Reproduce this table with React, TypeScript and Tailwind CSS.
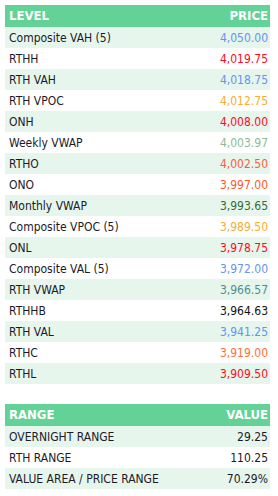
import React from 'react';

interface Level {
  name: string;
  price: string;
  color: string;
}

const levels: Level[] = [
  { name: 'Composite VAH (5)', price: '4,050.00', color: 'text-[#6495ed]' },
  { name: 'RTHH', price: '4,019.75', color: 'text-[#ff0a1e]' },
  { name: 'RTH VAH', price: '4,018.75', color: 'text-[#6495ed]' },
  { name: 'RTH VPOC', price: '4,012.75', color: 'text-[#f7ae32]' },
  { name: 'ONH', price: '4,008.00', color: 'text-[#ff0a1e]' },
  { name: 'Weekly VWAP', price: '4,003.97', color: 'text-[#8fbc8f]' },
  { name: 'RTHO', price: '4,002.50', color: 'text-[#ff5a3c]' },
  { name: 'ONO', price: '3,997.00', color: 'text-[#ff5a2a]' },
  { name: 'Monthly VWAP', price: '3,993.65', color: 'text-[#356b3a]' },
  { name: 'Composite VPOC (5)', price: '3,989.50', color: 'text-[#f7ae32]' },
  { name: 'ONL', price: '3,978.75', color: 'text-[#ff0a1e]' },
  { name: 'Composite VAL (5)', price: '3,972.00', color: 'text-[#6495ed]' },
  { name: 'RTH VWAP', price: '3,966.57', color: 'text-[#4f8f90]' },
  { name: 'RTHHB', price: '3,964.63', color: 'text-[#111111]' },
  { name: 'RTH VAL', price: '3,941.25', color: 'text-[#6495ed]' },
  { name: 'RTHC', price: '3,919.00', color: 'text-[#ff7038]' },
  { name: 'RTHL', price: '3,909.50', color: 'text-[#ff0a1e]' },
];

const ranges = [
  { name: 'OVERNIGHT RANGE', value: '29.25' },
  { name: 'RTH RANGE', value: '110.25' },
  { name: 'VALUE AREA / PRICE RANGE', value: '70.29%' },
];

const Header: React.FC<{ left: string; right: string }> = ({ left, right }) => (
  <div className="flex h-[22px] items-center justify-between bg-[#62d296] pl-1 pr-0.5 text-[13px] font-bold text-white">
    <span>{left}</span>
    <span>{right}</span>
  </div>
);

const Row: React.FC<{ index: number; left: string; right: string; color: string }> = ({ index, left, right, color }) => (
  <div
    className={`flex h-[21px] items-center justify-between pl-1 pr-0.5 text-[12px] ${
      index % 2 === 0 ? 'bg-[#e6f6ec]' : 'bg-white'
    }`}
  >
    <span className="text-[#1c1a2a]">{left}</span>
    <span className={color}>{right}</span>
  </div>
);

export default function App() {
  return (
    <div className="min-h-[496px] w-[278px] bg-white pl-[5px] pt-[5px] font-['DejaVu_Sans_Condensed',sans-serif]">
      <div className="w-[265px]">
        <Header left="LEVEL" right="PRICE" />
        {levels.map((l, i) => (
          <Row key={l.name} index={i} left={l.name} right={l.price} color={l.color} />
        ))}
      </div>
      <div className="mt-5 w-[265px]">
        <Header left="RANGE" right="VALUE" />
        {ranges.map((r, i) => (
          <Row key={r.name} index={i} left={r.name} right={r.value} color="text-[#1c1a2a]" />
        ))}
      </div>
    </div>
  );
}
